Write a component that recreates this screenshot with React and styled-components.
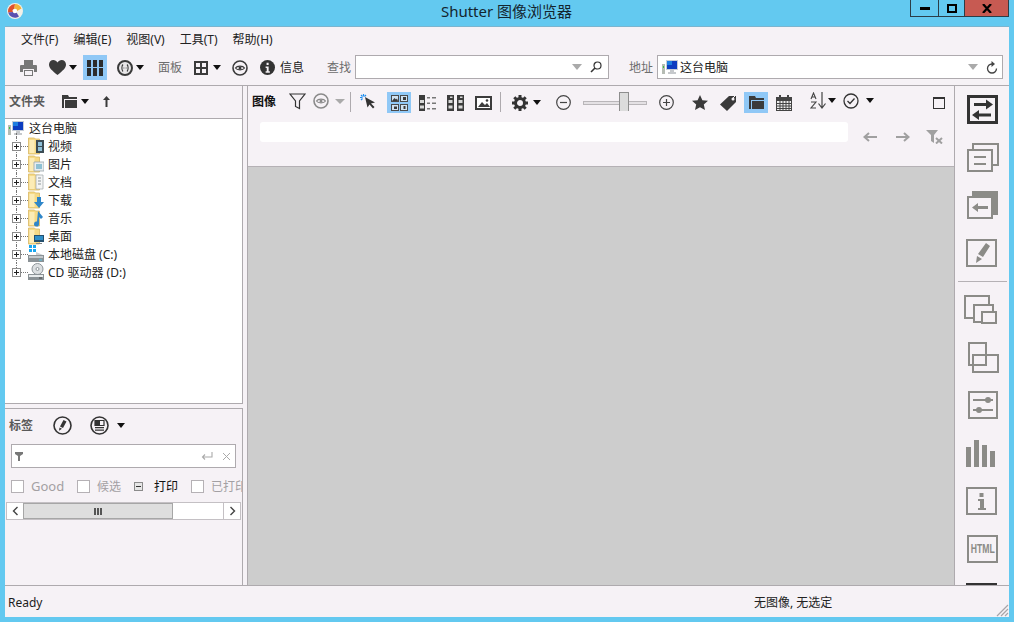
import React from 'react';
import styled, { createGlobalStyle } from 'styled-components';

const FONT = '"Noto Sans", "Noto Sans CJK SC", "Liberation Sans", sans-serif';
const DARK = '#3b3b3b';
const RAIL = '#8b8b87';

const Global = createGlobalStyle`
  html, body { margin: 0; padding: 0; background: #63c9f0; }
  #root { width: 1014px; height: 622px; overflow: hidden; }
  * { box-sizing: border-box; }
`;

const Frame = styled.div`
  width: 1014px;
  height: 622px;
  background: #63c9f0;
  display: flex;
  flex-direction: column;
  font-family: ${FONT};
  font-size: 12px;
  color: #1c1c1c;
`;

const TitleBar = styled.div`
  position: relative;
  height: 26px;
  flex: none;
  text-align: center;
  font-size: 15px;
  line-height: 23px;
  color: #13252e;
  padding-right: 1px;
`;

const AppIcon = styled.svg`
  position: absolute;
  left: 7px;
  top: 3px;
`;

const Caption = styled.div`
  position: absolute;
  right: 5px;
  top: 0;
  height: 17px;
  display: flex;
  border: 1px solid #2b3d47;
  border-top: none;
`;

const CaptionBtn = styled.div`
  width: ${p => p.$w}px;
  display: flex;
  align-items: center;
  justify-content: center;
  background: ${p => (p.$close ? '#c75a52' : 'transparent')};
  border-left: ${p => (p.$first ? 'none' : '1px solid #2b3d47')};
`;

const Client = styled.div`
  flex: none;
  height: 591px;
  margin: 0 5px;
  background: #f6f2f6;
  border-top: 1px solid #7bb5cf;
  display: flex;
  flex-direction: column;
`;

const MenuBar = styled.div`
  height: 25px;
  flex: none;
  display: flex;
  align-items: center;
  padding: 0 0 2px 16px;
  gap: 15px;
`;

const MenuItem = styled.span`
  font-size: 12px;
  color: #222;
`;

const TopBar = styled.div`
  height: 34px;
  flex: none;
  display: flex;
  align-items: flex-start;
  padding-top: 3px;
  border-bottom: 1px solid #aeaaae;
`;

const Tool = styled.div`
  flex: none;
  width: ${p => p.$w}px;
  height: ${p => p.$h || 25}px;
  margin-left: ${p => p.$ml || 0}px;
  margin-top: ${p => p.$mt || 0}px;
  display: flex;
  align-items: center;
  justify-content: center;
  background: ${p => (p.$active ? '#90c8f6' : 'transparent')};
`;

const Caret = styled.div`
  flex: none;
  width: 0;
  height: 0;
  margin-left: ${p => p.$ml || 0}px;
  border-left: ${p => (p.$size || 9) / 2}px solid transparent;
  border-right: ${p => (p.$size || 9) / 2}px solid transparent;
  border-top: ${p => Math.round((p.$size || 9) / 2)}px solid ${p => p.$color || '#111'};
`;

const CaretBox = styled(Tool)`
  width: ${p => p.$w || 9}px;
`;

const MaxBox = styled.div`
  flex: none;
  width: 12px;
  height: 12px;
  margin: 5px 0 0 58px;
  border: 1px solid #333;
  border-top-width: 2px;
`;

const BarLabel = styled.span`
  flex: none;
  width: ${p => p.$w}px;
  margin-left: ${p => p.$ml || 0}px;
  line-height: 25px;
  white-space: nowrap;
  color: ${p => p.$color || '#6d6d6d'};
`;

const Combo = styled.div`
  flex: none;
  width: ${p => p.$w}px;
  height: 24px;
  margin-left: ${p => p.$ml || 0}px;
  display: flex;
  align-items: center;
  background: #fff;
  border: 1px solid #aeaaae;
  padding: 0 ${p => p.$pr || 4}px 0 4px;
`;

const ComboText = styled.span`
  flex: 1;
  margin-left: 2px;
  color: #222;
`;

const Body = styled.div`
  flex: 1;
  min-height: 0;
  display: flex;
`;

const LeftColumn = styled.div`
  width: 238px;
  flex: none;
  display: flex;
  flex-direction: column;
`;

const FolderPanel = styled.div`
  height: 318px;
  flex: none;
  display: flex;
  flex-direction: column;
  border-right: 1px solid #aeaaae;
  border-bottom: 1px solid #aeaaae;
`;

const PanelHead = styled.div`
  height: 33px;
  flex: none;
  display: flex;
  align-items: center;
  padding: 0 0 2px 4px;
  border-bottom: 1px solid #aeaaae;
`;

const PanelTitle = styled.span`
  flex: none;
  font-weight: 600;
  color: #5a5a5a;
  font-size: 12px;
  width: ${p => p.$w}px;
`;

const Tree = styled.div`
  flex: 1;
  background: #fff;
`;

const RootRow = styled.div`
  position: relative;
  height: 18px;
  display: flex;
  align-items: center;
  padding-left: 3px;
  gap: 1px;
  &::after {
    content: '';
    position: absolute;
    left: 11px;
    top: 14px;
    height: 8px;
    border-left: 1px dotted #777;
  }
`;

const TreeRow = styled.div`
  position: relative;
  height: 18px;
  display: flex;
  align-items: center;
  padding-left: 7px;
  &::before {
    content: '';
    position: absolute;
    left: 11px;
    top: 0;
    height: ${p => (p.$last ? '9px' : '18px')};
    border-left: 1px dotted #777;
  }
`;

const Expander = styled.div`
  position: relative;
  z-index: 1;
  flex: none;
  width: 9px;
  height: 9px;
  background: #fff;
  border: 1px solid #8b8b8b;
  display: flex;
  align-items: center;
  justify-content: center;
  &::before {
    content: '';
    position: absolute;
    width: 5px;
    height: 1px;
    background: #222;
  }
  &::after {
    content: '';
    position: absolute;
    width: 1px;
    height: 5px;
    background: #222;
  }
`;

const Dots = styled.div`
  flex: none;
  width: 7px;
  border-top: 1px dotted #777;
`;

const TreeLabel = styled.span`
  margin-left: 4px;
  white-space: nowrap;
  color: #222;
`;

const Gap = styled.div`
  height: 4px;
  flex: none;
`;

const TagPanel = styled.div`
  flex: 1;
  display: flex;
  flex-direction: column;
  border-top: 1px solid #aeaaae;
  border-right: 1px solid #aeaaae;
  overflow: hidden;
`;

const TagHead = styled.div`
  height: 35px;
  flex: none;
  display: flex;
  align-items: center;
  padding: 0 0 3px 4px;
`;

const TagFilter = styled.div`
  height: 24px;
  flex: none;
  margin-left: 6px;
  width: 225px;
  background: #fff;
  border: 1px solid #aeaaae;
  display: flex;
  align-items: center;
  padding: 0 4px 0 3px;
`;

const Spring = styled.div`
  flex: 1;
`;

const TagRow = styled.div`
  height: 34px;
  flex: none;
  display: flex;
  align-items: center;
  padding: 2px 0 0 6px;
  overflow: hidden;
  white-space: nowrap;
`;

const Check = styled.div`
  flex: none;
  width: 13px;
  height: 13px;
  background: #fff;
  border: 1px solid #b5b1b5;
  margin-left: ${p => p.$ml || 0}px;
`;

const Mixed = styled.div`
  flex: none;
  width: 9px;
  height: 9px;
  border: 1px solid #8b8b8b;
  background: #e6e6e6;
  margin-left: ${p => p.$ml}px;
  display: flex;
  align-items: center;
  justify-content: center;
  &::after {
    content: '';
    width: 5px;
    height: 1px;
    background: #333;
  }
`;

const TagLabel = styled.span`
  flex: none;
  margin-left: ${p => p.$ml || 7}px;
  width: ${p => (p.$w ? `${p.$w}px` : 'auto')};
  color: ${p => (p.$on ? '#111' : '#a3a0a3')};
  font-size: ${p => p.$size || 12}px;
`;

const HScroll = styled.div`
  height: 18px;
  flex: none;
  margin-left: 1px;
  width: 235px;
  display: flex;
  background: #fff;
  border: 1px solid #c4c0c4;
`;

const ScrollBtn = styled.div`
  width: 16px;
  flex: none;
  display: flex;
  align-items: center;
  justify-content: center;
  background: #fff;
`;

const ScrollThumb = styled.div`
  width: 150px;
  flex: none;
  display: flex;
  align-items: center;
  justify-content: center;
  gap: 1px;
  background: #dedede;
  border: 1px solid #a6a6a6;
`;

const Grip = styled.i`
  width: 2px;
  height: 7px;
  background: #555;
`;

const Track = styled.div`
  flex: 1;
  border-right: 1px solid #c4c0c4;
`;

const Center = styled.div`
  flex: 1;
  min-width: 0;
  margin-left: 4px;
  display: flex;
  flex-direction: column;
  border-left: 1px solid #aeaaae;
`;

const ImageBar = styled.div`
  height: 36px;
  flex: none;
  display: flex;
  align-items: flex-start;
  padding-top: 6px;
`;

const Sep = styled.div`
  flex: none;
  width: 1px;
  height: 20px;
  margin-left: ${p => p.$ml}px;
  background: #aeaaae;
`;

const BoldLabel = styled.span`
  flex: none;
  width: 24px;
  margin-left: 4px;
  font-weight: 700;
  line-height: 19px;
  color: #111;
`;

const Slider = styled.div`
  position: relative;
  flex: none;
  width: 64px;
  height: 21px;
  margin-left: ${p => p.$ml}px;
  display: flex;
  align-items: center;
`;

const SliderRail = styled.div`
  width: 100%;
  height: 4px;
  background: #e4e1e4;
  border: 1px solid #b9b6b9;
`;

const SliderThumb = styled.div`
  position: absolute;
  left: 36px;
  top: 0;
  width: 10px;
  height: 19px;
  background: #dcdcdc;
  border: 1px solid #8d8d8d;
  border-bottom: none;
`;

const FilterBar = styled.div`
  height: 45px;
  flex: none;
  display: flex;
  align-items: flex-start;
  border-bottom: 1px solid #b5b1b5;
`;

const FilterInput = styled.div`
  flex: none;
  width: 588px;
  height: 20px;
  margin-left: 12px;
  background: #fff;
  border-radius: 3px;
`;

const Viewer = styled.div`
  flex: 1;
  background: #cdcdcd;
`;

const Rail = styled.div`
  width: 55px;
  flex: none;
  display: flex;
  flex-direction: column;
  padding: 9px 0 0 9px;
  border-left: 1px solid #aeaaae;
  overflow: hidden;
`;

const RailIcon = styled.svg`
  display: block;
  flex: none;
  margin-top: ${p => p.$mt || 0}px;
`;

const RailSep = styled.div`
  flex: none;
  height: 1px;
  width: 49px;
  margin: 10px 0 13px -6px;
  background: #b5b1b5;
`;

const HtmlBox = styled.div`
  flex: none;
  width: 31px;
  height: 28px;
  margin: 16px 0 4px 3px;
  border: 2px solid ${RAIL};
  display: flex;
  align-items: center;
  justify-content: center;
  overflow: hidden;
`;

const HtmlText = styled.span`
  font-family: "Liberation Sans", sans-serif;
  font-weight: 700;
  font-size: 12px;
  color: ${RAIL};
  transform: scaleX(0.72);
`;

const RailStub = styled.div`
  flex: none;
  width: 31px;
  height: 8px;
  margin: 16px 0 0 2px;
  background: #333;
`;

const StatusBar = styled.div`
  position: relative;
  height: 32px;
  flex: none;
  display: flex;
  align-items: center;
  padding: 1px 0 0 3px;
  border-top: 1px solid #aeaaae;
`;

const StatusRight = styled.span`
  position: absolute;
  left: 749px;
  top: 7px;
  color: #222;
`;

const ResizeGrip = styled.svg`
  position: absolute;
  right: 0;
  bottom: 0;
`;

const Ico = styled.svg`
  display: block;
  flex: none;
`;

/* toolbar icons */
const PrintIcon = () => (
  <Ico width="17" height="16" viewBox="0 0 17 16">
    <path d="M4 0h9v5H4z" fill="#777" />
    <path d="M1 5h15a1 1 0 0 1 1 1v6h-3V9H3v3H0V6a1 1 0 0 1 1-1z" fill="#777" />
    <path d="M4 10h9v6H4z" fill="#777" />
    <path d="M5 11h7v4H5z" fill="#f6f2f6" />
  </Ico>
);
const HeartIcon = () => (
  <Ico width="17" height="15" viewBox="0 0 17 15">
    <path d="M8.500 15C3 10.500 0 8 0 4.500 0 2 2 0 4.300 0 6 0 7.600.9 8.500 2.400 9.400.9 11 0 12.700 0 15 0 17 2 17 4.500 17 8 14 10.500 8.500 15z" fill={DARK} />
  </Ico>
);
const ColumnsIcon = () => (
  <Ico width="16" height="16" viewBox="0 0 16 16">
    <path d="M0 0h4v7H0zM0 8h4v8H0zM6 0h4v7H6zM6 8h4v8H6zM12 0h4v7h-4zM12 8h4v8h-4z" fill="#2c2c2c" />
  </Ico>
);
const BracketCircle = () => (
  <Ico width="16" height="16" viewBox="0 0 16 16">
    <circle cx="8" cy="8" r="7" fill="#e9e7e9" stroke={DARK} strokeWidth="2" />
    <path d="M6 4.500C4.500 6 4.500 10 6 11.500M10 4.500c1.500 1.500 1.500 5.500 0 7M6.500 8h.8M8.700 8h.8" fill="none" stroke={DARK} strokeWidth="1.100" />
  </Ico>
);
const GridIcon = () => (
  <Ico width="14" height="14" viewBox="0 0 14 14">
    <path d="M1 1h12v12H1zM7 1v12M1 7h12" fill="none" stroke={DARK} strokeWidth="2" />
  </Ico>
);
const EyeCircle = ({ color = DARK, size = 16 }) => (
  <Ico width={size} height={size} viewBox="0 0 16 16">
    <circle cx="8" cy="8" r="7" fill="none" stroke={color} strokeWidth="1.600" />
    <path d="M3.500 8C5 5.500 11 5.500 12.500 8 11 10.500 5 10.500 3.500 8z" fill="none" stroke={color} strokeWidth="1.200" />
    <circle cx="8" cy="8" r="1.500" fill={color} />
  </Ico>
);
const InfoIcon = () => (
  <Ico width="15" height="15" viewBox="0 0 16 16">
    <circle cx="8" cy="8" r="8" fill="#333" />
    <path d="M7 3h2.200v2.200H7zM6 7h3.200v5H10.500v1.500H6V12h1.200V8.500H6z" fill="#f6f2f6" />
  </Ico>
);
const DropGray = () => <Caret $size={11} $color="#aaa" />;
const MagnifierIcon = () => (
  <Ico width="12" height="12" viewBox="0 0 12 12">
    <circle cx="7.500" cy="4.500" r="3.500" fill="none" stroke="#333" strokeWidth="1.200" />
    <path d="M5 7L1 11" stroke="#333" strokeWidth="1.600" />
  </Ico>
);
const RefreshIcon = () => (
  <Ico width="12" height="13" viewBox="0 0 12 13">
    <path d="M6 3a4.500 4.500 0 1 0 4.500 4.500" fill="none" stroke="#444" strokeWidth="1.300" />
    <path d="M5.500 0v6L9 3z" fill="#444" />
  </Ico>
);
const PcIcon = () => (
  <Ico width="16" height="15" viewBox="0 0 16 15">
    <path d="M0 4h3v10H0z" fill="#b6bcb4" />
    <path d="M1 6h1v2H1z" fill="#3fbf3f" />
    <path d="M4 0h12v10H4z" fill="#c5ccd6" />
    <path d="M5 1h10v8H5z" fill="#0c3cc0" />
    <path d="M5 1h5v4H5z" fill="#1d7de0" />
    <path d="M8 10h4v2H8zM6 12h8v2H6z" fill="#c6c9cc" />
  </Ico>
);
const FolderDark = () => (
  <Ico width="15" height="13" viewBox="0 0 15 13">
    <path d="M0 0h6l1 2h8v2H2v9H0z" fill={DARK} />
    <path d="M3 5h12v8H3z" fill={DARK} />
  </Ico>
);
const UpIcon = () => (
  <Ico width="9" height="11" viewBox="0 0 9 11">
    <path d="M3.500 11V4H1L4.500 0 8 4H5.500v7z" fill={DARK} />
  </Ico>
);
const PenCircle = () => (
  <Ico width="19" height="19" viewBox="0 0 19 19">
    <circle cx="9.500" cy="9.500" r="8.500" fill="none" stroke="#333" strokeWidth="1.600" />
    <path d="M10.500 4l3 1.500-3.500 6.500-3-1.500zM6.500 11.500l2.500 1.300-3 2z" fill="#333" />
  </Ico>
);
const PanelCircle = () => (
  <Ico width="19" height="19" viewBox="0 0 19 19">
    <circle cx="9.500" cy="9.500" r="8.500" fill="none" stroke="#333" strokeWidth="1.600" />
    <path d="M5 4.500h9v5H5z" fill="none" stroke="#333" strokeWidth="1.200" />
    <path d="M5 4.500h5v5H5zM5 11h9v1.300H5zM5 13.500h9v1.300H5z" fill="#333" />
  </Ico>
);
const FunnelSmall = () => (
  <Ico width="8" height="9" viewBox="0 0 8 9">
    <path d="M0 0h8v2L5 4v5H3V4L0 2z" fill="#777" />
  </Ico>
);
const EnterIcon = () => (
  <Ico width="12" height="8" viewBox="0 0 12 8">
    <path d="M11 0v5H2M4 2.500L1.500 5 4 7.500" fill="none" stroke="#aaa" strokeWidth="1.100" />
  </Ico>
);
const CrossIcon = () => (
  <Ico width="9" height="9" viewBox="0 0 9 9">
    <path d="M1 1l7 7M8 1L1 8" stroke="#aaa" strokeWidth="1" />
  </Ico>
);
const Chevron = ({ right }) => (
  <Ico width="7" height="10" viewBox="0 0 7 10">
    <path d={right ? 'M1.500 1l4 4-4 4' : 'M5.500 1l-4 4 4 4'} fill="none" stroke="#444" strokeWidth="1.400" />
  </Ico>
);

/* image toolbar icons */
const FunnelOutline = () => (
  <Ico width="17" height="17" viewBox="0 0 17 17">
    <path d="M1 1h15l-5.500 7v7.500l-4-2V8z" fill="none" stroke="#333" strokeWidth="1.200" />
  </Ico>
);
const CursorIcon = () => (
  <Ico width="16" height="15" viewBox="0 0 16 15">
    <path d="M5 3l10 5.500-4 1 3.500 3.500-1.500 1.500-3.500-4-2 3z" fill="#333" />
    <path d="M3.500 0v2.500M0 3.500h2.500M1 1l1.500 1.500M1 6l1.500-1.500M6 1L4.500 2.500" stroke="#1f8ff0" strokeWidth="1.200" fill="none" />
  </Ico>
);
const ThumbsIcon = () => (
  <Ico width="17" height="16" viewBox="0 0 17 16">
    <path d="M0 0h8v7H0zM9 0h8v7H9zM0 9h8v7H0zM9 9h8v7H9z" fill="#4a4a4a" />
    <path d="M1 1h6v5H1zM10 1h6v5h-6zM1 10h6v5H1zM10 10h6v5h-6z" fill="#cfe2f2" />
    <path d="M1 6l2.500-3L5 4.500 6 3.500 7 6zM12 2h3v3h-3zM3 11.500h3v2.500H3zM12.500 11h2v3h-2z" fill="#3a3a3a" />
  </Ico>
);
const ListIcon = () => (
  <Ico width="17" height="16" viewBox="0 0 17 16">
    <path d="M0 0h6v16H0z" fill="#3c3c3c" />
    <path d="M1 5h4v3H1zM1 10.500h4v3H1z" fill="#d8d8d8" />
    <path d="M8 2h3v1.500H8zM13 2h4v1.500h-4zM8 7.500h3V9H8zM13 7.500h4V9h-4zM8 13h3v1.500H8zM13 13h4v1.500h-4z" fill="#777" />
  </Ico>
);
const DoubleListIcon = () => (
  <Ico width="17" height="16" viewBox="0 0 17 16">
    <path d="M0 0h7v16H0zM10 0h7v16h-7z" fill="#3c3c3c" />
    <path d="M1.500 5h4v3h-4zM1.500 10.500h4v3h-4zM11.500 5h4v3h-4zM11.500 10.500h4v3h-4zM3 1.500h2.500V3H3zM13 1.500h2.500V3H13z" fill="#d8d8d8" />
  </Ico>
);
const PictureIcon = () => (
  <Ico width="17" height="14" viewBox="0 0 17 14">
    <path d="M1 1h15v12H1z" fill="#fff" stroke="#3c3c3c" strokeWidth="2" />
    <path d="M3 11l4-5 3 3 2-2 3 4z" fill="#3c3c3c" />
    <circle cx="12" cy="4.500" r="1.300" fill="#3c3c3c" />
  </Ico>
);
const GearIcon = () => (
  <Ico width="16" height="16" viewBox="0 0 16 16">
    <circle cx="8" cy="8" r="4.500" fill="none" stroke="#333" strokeWidth="3" />
    <path d="M8 0v3M8 13v3M0 8h3M13 8h3M2.300 2.300l2.200 2.200M11.500 11.500l2.200 2.200M13.700 2.300l-2.200 2.200M4.500 11.500l-2.200 2.200" stroke="#333" strokeWidth="3" />
  </Ico>
);
const ZoomCircle = ({ plus }) => (
  <Ico width="15" height="15" viewBox="0 0 15 15">
    <circle cx="7.500" cy="7.500" r="6.800" fill="none" stroke="#444" strokeWidth="1.200" />
    <path d={plus ? 'M4 7.500h7M7.500 4v7' : 'M4 7.500h7'} stroke="#444" strokeWidth="1.200" />
  </Ico>
);
const StarIcon = () => (
  <Ico width="16" height="15" viewBox="0 0 16 15">
    <path d="M8 0l2.400 5.200 5.600.6-4.200 3.700 1.200 5.500L8 12.200 3 15l1.200-5.500L0 5.800l5.600-.6z" fill="#3a3a3a" />
  </Ico>
);
const TagIcon = () => (
  <Ico width="18" height="16" viewBox="0 0 18 16">
    <path d="M10 1h7v6l-9 9-7-6.500z" fill="#3a3a3a" />
    <circle cx="14" cy="4" r="1.500" fill="#f6f2f6" />
    <path d="M14 3l3-3" stroke="#f6f2f6" strokeWidth="1" />
  </Ico>
);
const CalendarIcon = () => (
  <Ico width="16" height="16" viewBox="0 0 16 16">
    <path d="M0 2h16v14H0z" fill="#444" />
    <path d="M3 0h2v3H3zM11 0h2v3h-2z" fill="#444" />
    <path d="M1 6h14v9H1z" fill="#eee" />
    <path d="M1 8.500h14M1 11h14M1 13.500h14M4 6v9M7 6v9M10 6v9M13 6v9" stroke="#444" strokeWidth="1" />
  </Ico>
);
const SortIcon = () => (
  <Ico width="16" height="17" viewBox="0 0 16 17">
    <path d="M12 0v15M8.500 11.500L12 16l3.500-4.500" fill="none" stroke="#444" strokeWidth="1.200" />
    <path d="M1 7l2.500-6L6 7M2 5h3M1 10h5L1 16h5" fill="none" stroke="#444" strokeWidth="1.100" />
  </Ico>
);
const CheckCircle = () => (
  <Ico width="16" height="16" viewBox="0 0 16 16">
    <circle cx="8" cy="8" r="7" fill="none" stroke="#333" strokeWidth="1.300" />
    <path d="M4.500 8l2.500 2.500 4.500-5" fill="none" stroke="#333" strokeWidth="1.300" />
  </Ico>
);
const ArrowGray = ({ right }) => (
  <Ico width="14" height="10" viewBox="0 0 14 10">
    <path d={right ? 'M0 5h12M8 1l4.500 4L8 9' : 'M14 5H2M6 1L1.500 5 6 9'} fill="none" stroke="#a0a0a0" strokeWidth="2" />
  </Ico>
);
const FunnelClear = () => (
  <Ico width="17" height="14" viewBox="0 0 17 14">
    <path d="M0 0h12L8 5v8L5 11V5z" fill="#a0a0a0" />
    <path d="M10 8l6 5.500M16 8l-6 5.500" stroke="#a0a0a0" strokeWidth="2" />
  </Ico>
);

/* tree icons */
const FOLDER_OVERLAY = {
  video: <><path d="M8 3h8v13H8z" fill="#3c4c55" /><path d="M10 5h4v4h-4zM10 10h4v4h-4z" fill="#8fc0d8" /></>,
  image: <><path d="M6 7h10v9H6z" fill="#e8edf0" stroke="#9aa5aa" strokeWidth=".8" /><path d="M8 9h6v5H8z" fill="#8ec0d4" /></>,
  doc: <><path d="M8 2h7v14H8z" fill="#f4f5f5" stroke="#a8aeb1" strokeWidth=".8" /><path d="M10 5h3M10 8h3M10 11h3" stroke="#8d9599" /></>,
  down: <path d="M9 6h4v5h3l-5 6-5-6h3z" fill="#2f86c9" />,
  music: <path d="M10 2l5 6-2 2-2-2v7a2.500 2.500 0 1 1-2-2.400z" fill="#2f86c9" />,
  desk: <><path d="M6 8h10v7H6z" fill="#24506e" /><path d="M7 9h8v4H7z" fill="#2f8fc8" /><path d="M8 16h6v1H8z" fill="#888" /></>,
};

const FolderIcon = ({ kind }) => (
  <Ico width="16" height="18" viewBox="0 0 16 18">
    <path d="M0.500 1h6l1 1h4v15h-11z" fill="#f6da86" stroke="#d9b862" strokeWidth=".8" />
    <path d="M1.500 3h5v13h-5z" fill="#fcecb6" />
    {FOLDER_OVERLAY[kind]}
  </Ico>
);

const DiskIcon = () => (
  <Ico width="16" height="18" viewBox="0 0 16 18">
    <path d="M1 0h3v3H1zM5 0h3v3H5zM1 4h3v3H1zM5 4h3v3H5z" fill="#19a6ee" />
    <path d="M8 7l7 3v2H8z" fill="#c9ced1" />
    <path d="M0 10h16v7H0z" fill="#8b9296" />
    <path d="M1 11h14v2H1z" fill="#c3c9cc" />
    <path d="M11 14.500h3v1h-3z" fill="#58c8e8" />
  </Ico>
);

const CdIcon = () => (
  <Ico width="16" height="18" viewBox="0 0 16 18">
    <circle cx="9.500" cy="6" r="5.500" fill="#dcdfe1" stroke="#8e9599" />
    <circle cx="9.500" cy="6" r="1.500" fill="#fff" stroke="#8e9599" />
    <path d="M0 11h16v6H0z" fill="#8b9296" />
    <path d="M1 12h14v2H1z" fill="#e8ebec" />
    <path d="M11 14.500h3v1h-3z" fill="#444" />
  </Ico>
);

const TREE = [
  { label: '视频', icon: <FolderIcon kind="video" /> },
  { label: '图片', icon: <FolderIcon kind="image" /> },
  { label: '文档', icon: <FolderIcon kind="doc" /> },
  { label: '下载', icon: <FolderIcon kind="down" /> },
  { label: '音乐', icon: <FolderIcon kind="music" /> },
  { label: '桌面', icon: <FolderIcon kind="desk" /> },
  { label: '本地磁盘 (C:)', icon: <DiskIcon /> },
  { label: 'CD 驱动器 (D:)', icon: <CdIcon /> },
];

const MENUS = ['文件(F)', '编辑(E)', '视图(V)', '工具(T)', '帮助(H)'];

export default function App() {
  return (
    <Frame>
      <Global />
      <TitleBar>
        <AppIcon width="16" height="16" viewBox="0 0 16 16">
          <circle cx="8" cy="8" r="8" fill="#f2f0e8" />
          <path d="M8 1a7 7 0 0 1 6.500 4.500L10 8a2 2 0 0 0-3-2z" fill="#f2b33a" />
          <path d="M8 1a7 7 0 0 0-6.800 8.500L6 9a2 2 0 0 1 1-3z" fill="#e0502c" />
          <path d="M1.200 9.500A7 7 0 0 0 12 13.500L9.500 9.500A2 2 0 0 1 6 9z" fill="#5a4fb0" />
          <circle cx="8" cy="8" r="2" fill="#fff" />
        </AppIcon>
        Shutter 图像浏览器
        <Caption>
          <CaptionBtn $w={27} $first>
            <Ico width="10" height="3" viewBox="0 0 10 3"><path d="M0 0h10v3H0z" fill="#000" /></Ico>
          </CaptionBtn>
          <CaptionBtn $w={26}>
            <Ico width="10" height="9" viewBox="0 0 10 9"><path d="M1 1h8v7H1z" fill="none" stroke="#000" strokeWidth="2" /></Ico>
          </CaptionBtn>
          <CaptionBtn $w={44} $close>
            <Ico width="10" height="9" viewBox="0 0 10 9"><path d="M1 0l8 9M9 0L1 9" stroke="#000" strokeWidth="2.200" /></Ico>
          </CaptionBtn>
        </Caption>
      </TitleBar>

      <Client>
        <MenuBar>
          {MENUS.map(m => <MenuItem key={m}>{m}</MenuItem>)}
        </MenuBar>

        <TopBar>
          <Tool $w={17} $ml={15}><PrintIcon /></Tool>
          <Tool $w={17} $ml={12}><HeartIcon /></Tool>
          <CaretBox $ml={2}><Caret /></CaretBox>
          <Tool $w={24} $ml={6} $active><ColumnsIcon /></Tool>
          <Tool $w={16} $ml={10}><BracketCircle /></Tool>
          <CaretBox $ml={2}><Caret /></CaretBox>
          <BarLabel $w={25} $ml={14}>面板</BarLabel>
          <Tool $w={14} $ml={11}><GridIcon /></Tool>
          <CaretBox $ml={4}><Caret /></CaretBox>
          <Tool $w={15} $ml={11}><EyeCircle /></Tool>
          <Tool $w={15} $ml={13}><InfoIcon /></Tool>
          <BarLabel $w={24} $ml={5} $color="#222">信息</BarLabel>
          <BarLabel $w={25} $ml={23}>查找</BarLabel>
          <Combo $w={254} $ml={3} $pr={6}>
            <ComboText />
            <DropGray />
            <Tool $w={12} $h={14} $ml={8}><MagnifierIcon /></Tool>
          </Combo>
          <BarLabel $w={24} $ml={20}>地址</BarLabel>
          <Combo $w={346} $ml={4}>
            <PcIcon />
            <ComboText>这台电脑</ComboText>
            <DropGray />
            <Tool $w={12} $h={14} $ml={8}><RefreshIcon /></Tool>
          </Combo>
        </TopBar>

        <Body>
          <LeftColumn>
            <FolderPanel>
              <PanelHead>
                <PanelTitle $w={53}>文件夹</PanelTitle>
                <FolderDark />
                <Caret $ml={4} />
                <Tool $w={9} $h={11} $ml={13}><UpIcon /></Tool>
              </PanelHead>
              <Tree>
                <RootRow><PcIcon /><TreeLabel>这台电脑</TreeLabel></RootRow>
                {TREE.map((t, i) => (
                  <TreeRow key={t.label} $last={i === TREE.length - 1}>
                    <Expander />
                    <Dots />
                    {t.icon}
                    <TreeLabel>{t.label}</TreeLabel>
                  </TreeRow>
                ))}
              </Tree>
            </FolderPanel>
            <Gap />
            <TagPanel>
              <TagHead>
                <PanelTitle $w={44}>标签</PanelTitle>
                <PenCircle />
                <Tool $w={19} $h={19} $ml={18}><PanelCircle /></Tool>
                <Caret $ml={8} />
              </TagHead>
              <TagFilter>
                <FunnelSmall />
                <Spring />
                <EnterIcon />
                <Tool $w={9} $h={9} $ml={9}><CrossIcon /></Tool>
              </TagFilter>
              <TagRow>
                <Check />
                <TagLabel $w={32} $size={13}>Good</TagLabel>
                <Check $ml={14} />
                <TagLabel>候选</TagLabel>
                <Mixed $ml={13} />
                <TagLabel $ml={11} $on>打印</TagLabel>
                <Check $ml={13} />
                <TagLabel>已打印</TagLabel>
              </TagRow>
              <HScroll>
                <ScrollBtn><Chevron /></ScrollBtn>
                <ScrollThumb><Grip /><Grip /><Grip /></ScrollThumb>
                <Track />
                <ScrollBtn><Chevron right /></ScrollBtn>
              </HScroll>
            </TagPanel>
          </LeftColumn>

          <Center>
            <ImageBar>
              <BoldLabel>图像</BoldLabel>
              <Tool $w={17} $h={18} $ml={13}><FunnelOutline /></Tool>
              <Tool $w={16} $h={18} $ml={7}><EyeCircle color="#8a8a8a" /></Tool>
              <Tool $w={11} $h={18} $ml={5}><Caret $size={10} $color="#aaa" /></Tool>
              <Sep $ml={5} />
              <Tool $w={16} $h={18} $ml={9}><CursorIcon /></Tool>
              <Tool $w={24} $h={21} $ml={11} $active><ThumbsIcon /></Tool>
              <Tool $w={17} $h={21} $ml={8}><ListIcon /></Tool>
              <Tool $w={17} $h={21} $ml={11}><DoubleListIcon /></Tool>
              <Tool $w={17} $h={21} $ml={11}><PictureIcon /></Tool>
              <Sep $ml={8} />
              <Tool $w={16} $h={21} $ml={11}><GearIcon /></Tool>
              <CaretBox $h={21} $ml={4}><Caret /></CaretBox>
              <Tool $w={15} $h={21} $ml={15}><ZoomCircle /></Tool>
              <Slider $ml={12}><SliderRail /><SliderThumb /></Slider>
              <Tool $w={15} $h={21} $ml={12}><ZoomCircle plus /></Tool>
              <Tool $w={16} $h={21} $ml={18}><StarIcon /></Tool>
              <Tool $w={18} $h={21} $ml={11}><TagIcon /></Tool>
              <Tool $w={24} $h={21} $ml={7} $active><FolderDark /></Tool>
              <Tool $w={16} $h={21} $ml={8}><CalendarIcon /></Tool>
              <Tool $w={16} $h={17} $ml={18}><SortIcon /></Tool>
              <CaretBox $h={17} $ml={1}><Caret /></CaretBox>
              <Tool $w={16} $h={17} $ml={7}><CheckCircle /></Tool>
              <CaretBox $w={10} $h={17} $ml={6}><Caret /></CaretBox>
              <MaxBox />
            </ImageBar>
            <FilterBar>
              <FilterInput />
              <Tool $w={14} $h={16} $ml={15} $mt={7}><ArrowGray /></Tool>
              <Tool $w={14} $h={16} $ml={19} $mt={7}><ArrowGray right /></Tool>
              <Tool $w={17} $h={14} $ml={16} $mt={8}><FunnelClear /></Tool>
            </FilterBar>
            <Viewer />
          </Center>

          <Rail>
            <RailIcon width="36" height="32" viewBox="0 0 36 32">
              <path d="M4.500 1.500h28v26h-28z" fill="none" stroke="#333" strokeWidth="3" />
              <path d="M10 8h12V4.500l7 5-7 5V11H10z" fill="#333" />
              <path d="M27 18.500H15V15l-7 5 7 5v-3.500h12z" fill="#333" />
            </RailIcon>
            <RailIcon $mt={16} width="36" height="32" viewBox="0 0 36 32">
              <path d="M9 7V1h25v21h-6" fill="none" stroke={RAIL} strokeWidth="2" />
              <path d="M4 7h24v21H4z" fill="#f6f2f6" stroke={RAIL} strokeWidth="2" />
              <path d="M10 14h12M10 21h12" stroke={RAIL} strokeWidth="2" />
            </RailIcon>
            <RailIcon $mt={16} width="36" height="32" viewBox="0 0 36 32">
              <path d="M8 0h26v24H8z" fill={RAIL} />
              <path d="M4 6h24v21H4z" fill="#f6f2f6" stroke={RAIL} strokeWidth="2" />
              <path d="M24 15H14v-3l-6 4.500 6 4.500v-3h10z" fill={RAIL} />
            </RailIcon>
            <RailIcon $mt={16} width="36" height="32" viewBox="0 0 36 32">
              <path d="M3 1h29v26H3z" fill="none" stroke={RAIL} strokeWidth="2" />
              <path d="M22 4l4 3-7 11-5-3zM13 17l5 3-6 4z" fill={RAIL} />
            </RailIcon>
            <RailSep />
            <RailIcon width="36" height="32" viewBox="0 0 36 32">
              <path d="M1 1h24v22H1z" fill="none" stroke={RAIL} strokeWidth="2" />
              <path d="M10 10h19v17H10z" fill="#f6f2f6" stroke={RAIL} strokeWidth="2" />
              <path d="M18 17h14v11H18z" fill="#f6f2f6" stroke={RAIL} strokeWidth="2" />
            </RailIcon>
            <RailIcon $mt={15} width="36" height="32" viewBox="0 0 36 32">
              <path d="M5 1h17v22H5z" fill="none" stroke={RAIL} strokeWidth="2" />
              <path d="M9 13h25v17H9z" fill="none" stroke={RAIL} strokeWidth="2" />
            </RailIcon>
            <RailIcon $mt={17} width="36" height="32" viewBox="0 0 36 32">
              <path d="M5 1h28v26H5z" fill="none" stroke={RAIL} strokeWidth="2" />
              <path d="M9 9h20M9 19h20" stroke={RAIL} strokeWidth="2" />
              <circle cx="24" cy="9" r="3" fill={RAIL} />
              <circle cx="15" cy="19" r="3" fill={RAIL} />
            </RailIcon>
            <RailIcon $mt={17} width="36" height="32" viewBox="0 0 36 32">
              <path d="M2 7h5v20H2zM10 0h5v27h-5zM18 5h5v22h-5zM26 11h5v16h-5z" fill={RAIL} />
            </RailIcon>
            <RailIcon $mt={15} width="36" height="32" viewBox="0 0 36 32">
              <path d="M3 1h29v26H3z" fill="none" stroke={RAIL} strokeWidth="2" />
              <path d="M15.500 6h4v4h-4zM14 12h6v9h2v2h-8v-2h2v-7h-2z" fill={RAIL} />
            </RailIcon>
            <HtmlBox><HtmlText>HTML</HtmlText></HtmlBox>
            <RailStub />
          </Rail>
        </Body>

        <StatusBar>
          Ready
          <StatusRight>无图像, 无选定</StatusRight>
          <ResizeGrip width="13" height="13" viewBox="0 0 13 13">
            <path d="M1 12L12 1M5 12l7-7M9 12l3-3" stroke="#a8a5a8" strokeWidth="1.200" />
          </ResizeGrip>
        </StatusBar>
      </Client>
    </Frame>
  );
}
